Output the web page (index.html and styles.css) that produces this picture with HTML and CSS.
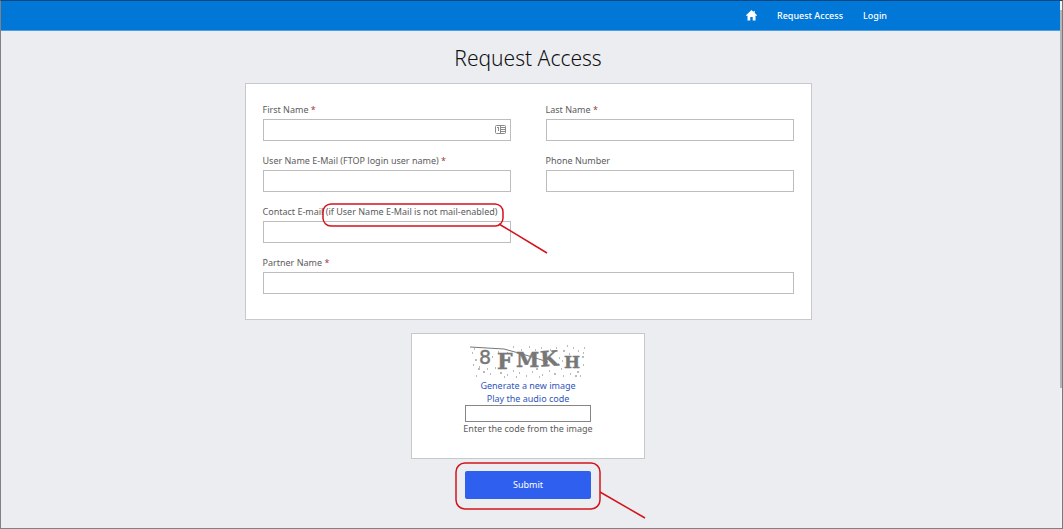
FILE: index.html
```html
<!DOCTYPE html>
<html lang="en">
<head>
<meta charset="utf-8">
<meta name="viewport" content="width=device-width, initial-scale=1">
<title>Request Access</title>
<link rel="stylesheet" href="styles.css">
</head>
<body>
<div class="window">
  <div class="page">
    <header class="topbar">
      <nav class="nav" aria-label="Main">
        <a class="nav-link" href="#" aria-label="Home">
          <svg class="home-icon" viewBox="0 0 11 11" aria-hidden="true"><path d="M5.500 0 0 5.200 .6 6 1.500 5.400V10.500H4.300V7H6.700V10.500H9.500V5.400L10.400 6 11 5.200 8.800 3.100V1H7.600V2Z"/></svg>
        </a>
        <a class="nav-link" href="#">Request Access</a>
        <a class="nav-link" href="#">Login</a>
      </nav>
    </header>
    <main class="main">
      <h1 class="title">Request Access</h1>
      <form class="form">
        <div class="card fields">
          <div class="field">
            <label class="label" for="first">First Name <span class="req">*</span></label>
            <div class="control">
              <input class="input" id="first" type="text">
              <svg class="card-icon" viewBox="0 0 11 9" aria-hidden="true"><rect x=".5" y=".5" width="10" height="8" rx="1" fill="#fff" stroke="#8a8a8a"/><path d="M5.500 1v7M6 2.500h4M6 4.500h4M6 6.500h4" stroke="#8a8a8a" fill="none"/><path d="M2 2h2v4H3V3H2Z" fill="#8a8a8a"/></svg>
            </div>
          </div>
          <div class="field">
            <label class="label" for="last">Last Name <span class="req">*</span></label>
            <input class="input" id="last" type="text">
          </div>
          <div class="field">
            <label class="label" for="user">User Name E-Mail (FTOP login user name) <span class="req">*</span></label>
            <input class="input" id="user" type="text">
          </div>
          <div class="field">
            <label class="label" for="phone">Phone Number</label>
            <input class="input" id="phone" type="text">
          </div>
          <div class="field">
            <label class="label" for="contact">Contact E-mail <span class="marked">(if User Name E-Mail is not mail-enabled)<svg class="note note-label" viewBox="0 0 226 51" aria-hidden="true"><rect x="1" y="1" width="180" height="22" rx="8"/><path d="M177 21 225 50"/></svg></span></label>
            <input class="input" id="contact" type="text">
          </div>
          <div class="field wide">
            <label class="label" for="partner">Partner Name <span class="req">*</span></label>
            <input class="input" id="partner" type="text">
          </div>
        </div>
        <div class="card captcha">
          <svg class="captcha-image" viewBox="0 0 116 34" role="img" aria-label="Verification code">
            <g class="captcha-text">
              <text class="sans" x="9" y="19" font-size="19">8</text>
              <text x="27" y="24" font-size="22">F</text>
              <text x="46" y="22" font-size="21">M</text>
              <text x="70" y="21" font-size="21" transform="rotate(-3 80 14)">K</text>
              <text x="94" y="23" font-size="17">H</text>
            </g>
            <path class="scratch" d="M0 2 34 4Q60 11 78 17"/>
            <path class="specks" d="M2 8h1M5 15h2M9 22h1M13 27h2M6 31h1M20 29h1M25 23h1M30 28h2M37 30h1M43 26h1M49 28h1M56 31h1M62 27h1M66 24h2M72 30h1M79 26h1M84 29h2M91 24h1M93 31h1M100 29h1M107 27h2M110 31h1M113 20h1M112 12h2M108 6h1M103 3h1M99 9h1M93 6h2M89 13h1M86 3h1M80 5h1M71 3h1M65 5h1M59 2h1M51 5h1M43 2h1M37 8h1M28 7h1M22 12h1M4 4h1M3 20h1M8 24h2M17 24h1M34 32h1M46 32h1M69 32h1M88 19h1M92 16h1M105 31h2M114 3h1M97 1h1M113 8h1"/>
          </svg>
          <a class="link" href="#">Generate a new image</a>
          <a class="link" href="#">Play the audio code</a>
          <input class="code" id="code" type="text">
          <label class="hint" for="code">Enter the code from the image</label>
        </div>
        <div class="actions">
          <button class="submit" type="button">Submit</button>
          <svg class="note note-submit" viewBox="0 0 192 58" aria-hidden="true"><rect x="1" y="1" width="144" height="46" rx="9"/><path d="M145 30 190 56"/></svg>
        </div>
      </form>
    </main>
  </div>
  <div class="scroll" aria-hidden="true"><div class="thumb"></div></div>
</div>
</body>
</html>
```
FILE: styles.css
```css
* { box-sizing: border-box; }

body {
  margin: 0;
  background: #ecedf1;
  color: #5c5c5c;
  font-family: "Noto Sans", "Open Sans", sans-serif;
  font-size: 9px;
  line-height: 14px;
}

a { text-decoration: none; }
svg { display: block; }

.window {
  display: flex;
  min-height: 100vh;
  border: 1px solid #808184;
  border-top-color: #0a477d;
  border-right-color: #77787b;
}

.page { flex: 1; min-width: 0; }

.topbar {
  display: flex;
  justify-content: flex-end;
  height: 30px;
  padding-right: 173px;
  background: #0178d7;
  border-bottom: 1px solid #4f9dde;
}

.nav { display: flex; align-items: center; gap: 20px; }
.nav-link { color: #fff; font-weight: 500; }
.home-icon { width: 11px; height: 11px; fill: #fff; }

.scroll { width: 2px; padding-top: 9px; background: #f1f1f2; }
.thumb { height: 73%; background: #b4b5b7; }

.main {
  display: flex;
  flex-direction: column;
  align-items: center;
  padding: 12px 21px 16px 16px;
}

.title {
  margin: 0 0 10px;
  color: #111;
  font-family: "Noto Sans", "Open Sans", sans-serif;
  font-size: 21px;
  font-weight: 300;
  line-height: 30px;
}

.form {
  display: flex;
  flex-direction: column;
  align-items: center;
  width: 100%;
}

.card { background: #fff; border: 1px solid #c8c9cc; }

.fields {
  display: grid;
  grid-template-columns: 1fr 1fr;
  gap: 12px 35px;
  width: 100%;
  max-width: 567px;
  padding: 18px 17px 25px;
}

.field { display: flex; flex-direction: column; gap: 1px; min-width: 0; }
.field:nth-child(5) { grid-column: 1; }
.wide { grid-column: 1 / -1; }
.label { line-height: 16px; white-space: nowrap; }
.req { color: #a5403c; }
.control { position: relative; }

.input {
  display: block;
  width: 100%;
  height: 22px;
  padding: 0 6px;
  border: 1px solid #bdbdbd;
  border-radius: 0;
  background: #fff;
  font: inherit;
}

.card-icon {
  position: absolute;
  top: 6px;
  right: 5px;
  width: 11px;
  height: 9px;
}

.captcha {
  display: flex;
  flex-direction: column;
  align-items: center;
  width: 234px;
  margin-top: 13px;
  padding: 11px 12px 22px;
}

.captcha-image { width: 116px; height: 34px; }
.captcha-text {
  fill: #777;
  stroke: #777;
  stroke-width: .4;
  font-family: "DejaVu Serif", serif;
  font-weight: 700;
}
.sans { font-family: "DejaVu Sans", sans-serif; font-weight: 400; }
.scratch { fill: none; stroke: #777; }
.specks { fill: none; stroke: #777; }
.link { color: #3156bd; line-height: 13px; }

.code {
  width: 126px;
  height: 17px;
  padding: 0 4px;
  border: 1px solid #858585;
  border-radius: 0;
  background: #fff;
  font: inherit;
}

.actions { position: relative; margin-top: 12px; }

.submit {
  display: block;
  width: 126px;
  height: 28px;
  padding: 0;
  border: 0;
  border-radius: 2px;
  background: #2f5fee;
  color: #fff;
  font: inherit;
}

.marked { position: relative; }

.note {
  position: absolute;
  overflow: visible;
  fill: none;
  stroke: #d2141c;
  stroke-width: 1.5;
  pointer-events: none;
}

.note-label { top: -2px; left: -4px; width: 226px; height: 51px; }
.note-submit { top: -9px; left: -10px; width: 192px; height: 58px; }
```
